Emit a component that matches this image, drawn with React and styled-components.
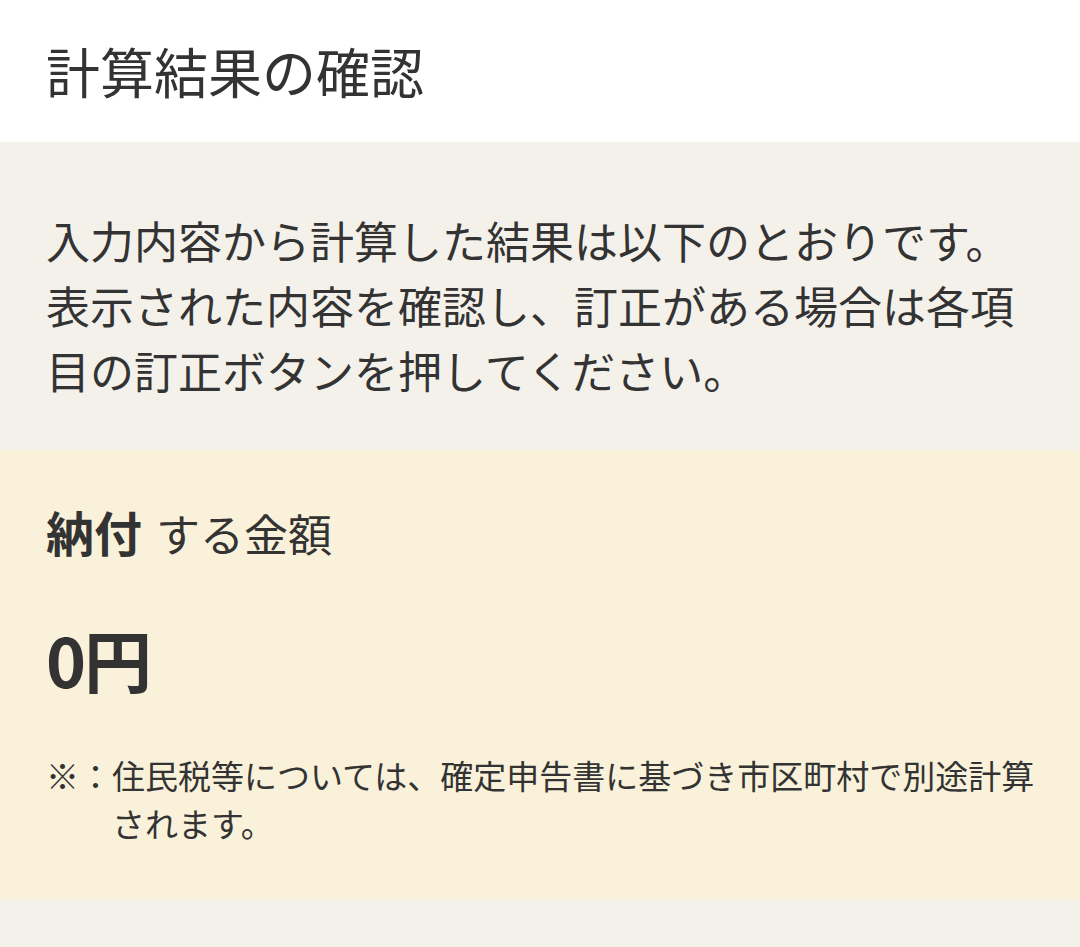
import React from 'react'
import styled, { createGlobalStyle } from 'styled-components'

const GlobalStyle = createGlobalStyle`
    html, body {
        margin: 0;
        padding: 0;
        background: #f4f1eb;
    }
    body {
        font-family: "Noto Sans CJK JP", "Noto Sans", sans-serif;
        color: #333333;
    }
`;

const Page = styled.div`
    width: 1080px;
    min-height: 947px;
    background: #f4f1eb;
`;

const Header = styled.header`
    background: #ffffff;
    height: 142px;
    padding: 0 46px;
    display: flex;
    align-items: center;
    box-sizing: border-box;
`;

const Title = styled.h1`
    margin: 0;
    font-size: 54px;
    font-weight: 400;
    line-height: 1.4;
    color: #333333;
`;

const Intro = styled.section`
    padding: 66px 46px 47px;
`;

const IntroText = styled.p`
    margin: 0;
    font-size: 44px;
    line-height: 65px;
    color: #333333;
`;

const AmountPanel = styled.section`
    background: #f9f1d9;
    padding: 45px 30px 53px 46px;
    display: flex;
    flex-direction: column;
`;

const AmountHeading = styled.h2`
    margin: 0;
    font-size: 44px;
    font-weight: 400;
    line-height: 72px;
    display: flex;
    align-items: baseline;
    gap: 14px;
`;

const Strong = styled.strong`
    font-size: 48px;
    font-weight: 700;
`;

const Amount = styled.p`
    margin: 50px 0 0;
    font-size: 68px;
    font-weight: 700;
    line-height: 80px;
    letter-spacing: -2px;
`;

const Note = styled.div`
    margin-top: 52px;
    display: grid;
    grid-template-columns: 66px 1fr;
    font-size: 33px;
    line-height: 48px;
`;

const NoteMark = styled.span`
    white-space: nowrap;
`;

const NoteText = styled.span``;

const App = () => {
    return (
        <Page>
            <GlobalStyle />
            <Header>
                <Title>計算結果の確認</Title>
            </Header>
            <Intro>
                <IntroText>
                    入力内容から計算した結果は以下のとおりです。<br />
                    表示された内容を確認し、訂正がある場合は各項目の訂正ボタンを押してください。
                </IntroText>
            </Intro>
            <AmountPanel>
                <AmountHeading>
                    <Strong>納付</Strong>
                    <span>する金額</span>
                </AmountHeading>
                <Amount>0円</Amount>
                <Note>
                    <NoteMark>※：</NoteMark>
                    <NoteText>住民税等については、確定申告書に基づき市区町村で別途計算されます。</NoteText>
                </Note>
            </AmountPanel>
        </Page>
    );
}

export default App;
